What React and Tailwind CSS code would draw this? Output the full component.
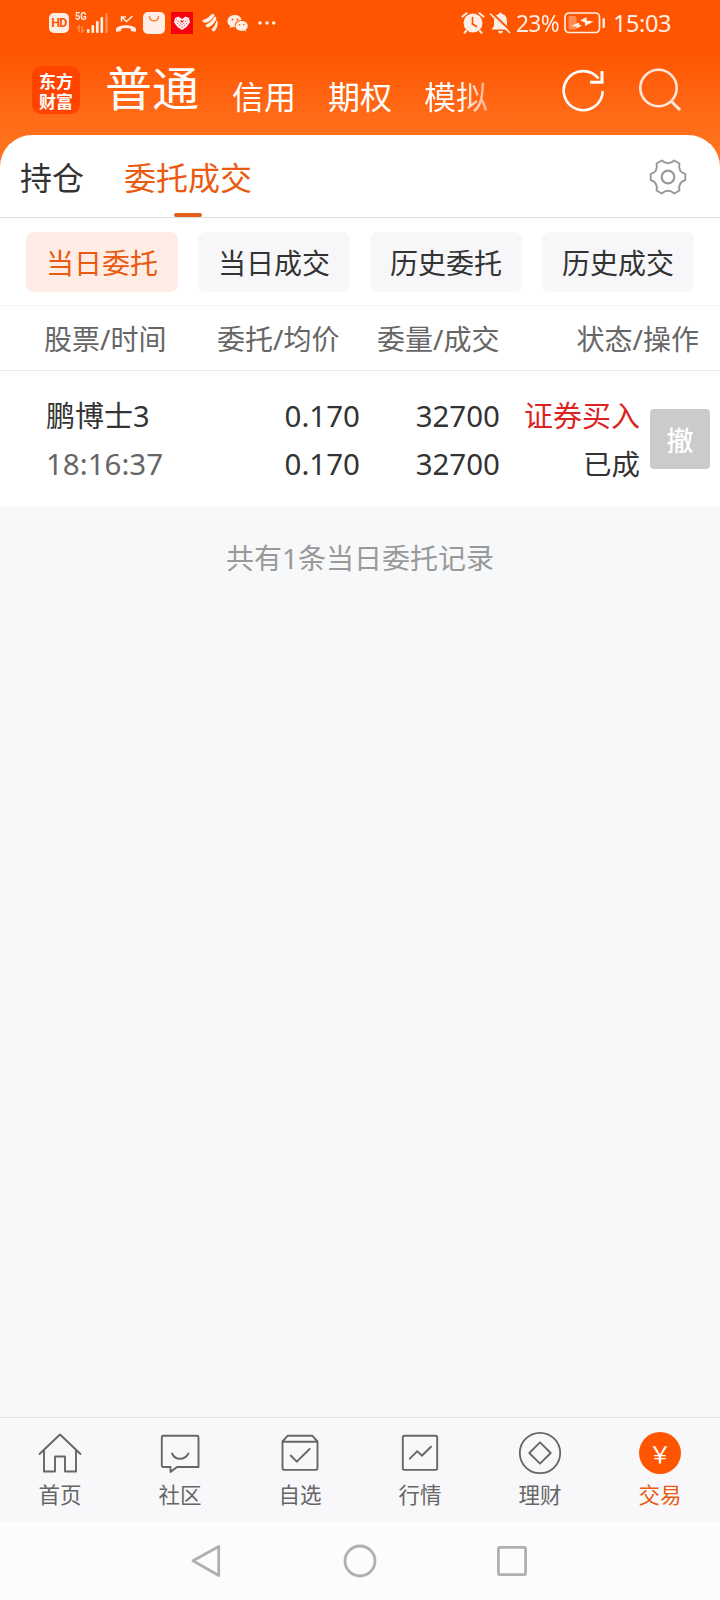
import React, { useState } from 'react';
import clsx from 'clsx';

const accountTabs = ['信用', '期权', '模拟'];
const filters = ['当日委托', '当日成交', '历史委托', '历史成交'];

const orders = [
  {
    name: '鹏博士3',
    time: '18:16:37',
    price: '0.170',
    avgPrice: '0.170',
    amount: '32700',
    filled: '32700',
    side: '证券买入',
    status: '已成',
  },
];

const HomeIcon = () => (
  <svg width="44" height="44" viewBox="0 0 44 44" fill="none" stroke="currentColor" strokeWidth="1.9" strokeLinejoin="round" strokeLinecap="round">
    <path d="M1.5 23 22 3.500 42.500 23M6 19.500V40.500H17V25.500H27V40.500H38V19.500" />
  </svg>
);

const CommunityIcon = () => (
  <svg width="44" height="44" viewBox="0 0 44 44" fill="none" stroke="currentColor" strokeWidth="1.9" strokeLinejoin="round" strokeLinecap="round">
    <path d="M5 4.700H39Q40.500 4.700 40.500 6.200V36H19L12.500 41V36H5Q3.800 36 3.800 34.500V6.200Q3.800 4.700 5 4.700Z" />
    <path d="M14 22.500Q16.500 27.800 22 27.800T30.500 22.500" />
  </svg>
);

const WatchlistIcon = () => (
  <svg width="44" height="44" viewBox="0 0 44 44" fill="none" stroke="currentColor" strokeWidth="1.9" strokeLinejoin="round" strokeLinecap="round">
    <path d="M4.500 10.500 9.800 4.700H34.200L39.500 10.500V36.700Q39.500 38.900 37.300 38.900H6.700Q4.500 38.900 4.500 36.700ZM4.500 10.700H39.500" />
    <path d="M12.700 24.500 18.800 30.700 31.600 18" />
  </svg>
);

const MarketIcon = () => (
  <svg width="44" height="44" viewBox="0 0 44 44" fill="none" stroke="currentColor" strokeWidth="1.9" strokeLinejoin="round" strokeLinecap="round">
    <rect x="4.800" y="4.700" width="34.400" height="34.200" rx="1.500" />
    <path d="M11.800 27.700 19.300 20.200 23.800 24.700 33 15.700" />
  </svg>
);

const FinanceIcon = () => (
  <svg width="44" height="44" viewBox="0 0 44 44" fill="none" stroke="currentColor" strokeWidth="1.8" strokeLinejoin="round">
    <circle cx="22" cy="22" r="20.200" />
    <path d="M22 11.300 32.700 22 22 32.700 11.300 22Z" />
  </svg>
);

const TradeIcon = () => (
  <span className="my-px flex h-[42px] w-[42px] items-center justify-center rounded-full bg-[#ff5500] font-['Noto_Sans_CJK_SC',sans-serif] text-[23px] leading-none text-white">
    {'\uffe5'}
  </span>
);

const navItems = [
  { label: '首页', icon: HomeIcon },
  { label: '社区', icon: CommunityIcon },
  { label: '自选', icon: WatchlistIcon },
  { label: '行情', icon: MarketIcon },
  { label: '理财', icon: FinanceIcon },
  { label: '交易', icon: TradeIcon },
];

const StatusBar = () => (
  <div className="flex h-[46px] items-center pl-[49px] text-[#ffeee5]">
    <span className="flex h-5 w-5 items-center justify-center rounded-[5px] bg-[#ffeee5] font-['Roboto',sans-serif] text-[12.500px] leading-none font-bold tracking-tighter text-[#ff5500]">
      HD
    </span>
    <div className="relative ml-[6px] h-[22px] w-[34px]">
      <span className="absolute -top-[2px] left-0 origin-left scale-x-[0.85] font-['Roboto',sans-serif] text-[11px] leading-[14px] font-bold">5G</span>
      <svg width="34" height="22" viewBox="0 0 34 22" fill="currentColor">
        <path d="M2 16 4 14V20M7 14V20L9 18" fill="none" stroke="currentColor" strokeWidth="1.300" opacity="0.4" />
        <rect x="12" y="17" width="2.600" height="4" rx="1" />
        <rect x="16.500" y="13" width="2.600" height="8" rx="1" />
        <rect x="21" y="9" width="2.600" height="12" rx="1" />
        <rect x="25.500" y="5" width="2.600" height="16" rx="1" />
        <rect x="30.200" y="1" width="2.600" height="20" rx="1" opacity="0.35" />
      </svg>
    </div>
    <svg className="ml-[6px]" width="22" height="22" viewBox="0 0 22 22" fill="currentColor">
      <path d="M1 19V17C3 12 19 12 21 17V19Q21 20 20 19.800L16 19 15.500 16.500Q11 15.300 6.500 16.500L6 19 2 19.800Q1 20 1 19Z" />
      <path d="M6.500 9.500V5H11M6.500 5 11.500 9.500 17.500 4" fill="none" stroke="currentColor" strokeWidth="1.500" />
    </svg>
    <svg className="ml-[6px]" width="22" height="22" viewBox="0 0 22 22">
      <rect width="22" height="22" rx="5" fill="currentColor" />
      <path d="M6.500 4.500C7 10.300 15 10.300 15.500 4.500" fill="none" stroke="#ff7a35" strokeWidth="1.500" strokeLinecap="round" />
    </svg>
    <svg className="ml-[6px]" width="22" height="22" viewBox="0 0 22 22">
      <rect width="22" height="22" fill="#f5000c" />
      <path d="M11 18 6.500 15 3 10.500 4 6 7.500 4.500 11 7 14.500 4.500 18 6 19 10.500 15.500 15Z" fill="#ffe9e9" />
      <path d="M5.500 7.500 11 13 16.500 7.500M6 11 11 15.500 16 11" fill="none" stroke="#e8303a" strokeWidth="0.900" strokeDasharray="1.200 1.200" />
      <path d="M9 8.500 11 11 13 8.500Z" fill="#e8101c" />
    </svg>
    <svg className="ml-[8px]" width="18" height="20" viewBox="0 0 18 20" fill="currentColor">
      <path d="M1 7.500Q8 5 10 1.500 14 0 13.500 2.500 10.500 8 5 9.800 2 10 1 7.500Z" />
      <path d="M4.500 12Q11 9 13.500 3.500 16 3.500 15 7 12 12.500 7 14.500 5 14.500 4.500 12Z" />
      <path d="M10.500 16.500Q15 12 15.500 7 17.500 9 16 14 14.500 18 13 18.500 11.500 18.500 10.500 16.500Z" />
    </svg>
    <svg className="ml-[8px]" width="22" height="20" viewBox="0 0 22 20" fill="currentColor">
      <path d="M8 2C3.500 2 .500 4.700 .500 8.200 .500 10.200 1.500 11.800 3.200 12.900L2.600 15.200 5.200 13.900Q6.500 14.300 7.800 14.300C6.800 10 10 7 14.700 7 14 4 11.300 2 8 2Z" />
      <path d="M14.700 8C11 8 8.500 10.200 8.500 13S11 17.900 14.700 17.900Q15.900 17.900 17 17.500L19.200 18.500 18.700 16.700Q20.800 15.200 20.800 13C20.800 10.200 18.300 8 14.700 8Z" />
      <g fill="#ff5500">
        <circle cx="5.500" cy="6.600" r="1" />
        <circle cx="10.300" cy="6.600" r="1" />
        <circle cx="12.600" cy="11.800" r="0.800" />
        <circle cx="16.800" cy="11.800" r="0.800" />
      </g>
    </svg>
    <svg className="ml-[9px]" width="18" height="4" viewBox="0 0 18 4" fill="currentColor">
      <circle cx="2" cy="2" r="1.800" />
      <circle cx="9" cy="2" r="1.800" />
      <circle cx="15.700" cy="2" r="1.800" />
    </svg>

    <div className="ml-auto flex items-center pr-[48px]">
      <svg width="24" height="22" viewBox="0 0 24 22">
        <circle cx="12" cy="11" r="9.500" fill="currentColor" />
        <path d="M1.500 4.500 5.500 1.200M22.500 4.500 18.500 1.200M5 19 3.500 20.800M19 19 20.500 20.800" stroke="currentColor" strokeWidth="2" strokeLinecap="round" />
        <path d="M11.500 5.500V12L15.500 14.500" fill="none" stroke="#ff5500" strokeWidth="1.700" strokeLinecap="round" />
      </svg>
      <svg className="ml-[4px]" width="23" height="22" viewBox="0 0 23 22">
        <path d="M11.500 .500Q13 .500 13 2C17 3 18 6 18 10V14L20.500 17.500H2.500L5 14V10C5 6 6 3 10 2Q10 .500 11.500 .500ZM9 19H14Q13.500 21.500 11.500 21.500T9 19Z" fill="currentColor" />
        <path d="M3 1 22 19" stroke="#ff5500" strokeWidth="2" />
        <path d="M1.500 2 20.500 20.500" stroke="currentColor" strokeWidth="1.600" strokeLinecap="round" />
      </svg>
      <span className="ml-[4px] w-[45px] pt-px text-[23.500px] leading-none tracking-[-0.700px]">
        <span className="inline-block origin-left scale-x-[0.97]">23%</span>
      </span>
      <svg className="ml-[3px]" width="42" height="22" viewBox="0 0 42 22">
        <rect x="1" y="1" width="34.500" height="19.500" rx="4" fill="none" stroke="currentColor" strokeWidth="1.700" />
        <rect x="4.500" y="4" width="8" height="13.500" rx="1.500" fill="currentColor" opacity="0.35" />
        <path d="M7 14 15 10.500V12.500L18 13.500 12.500 16.500V14.500ZM16 8.500 22.500 5V8.500L29.500 9.500 21 14V10.500Z" fill="currentColor" />
        <rect x="38.500" y="6" width="2.400" height="10" rx="1.200" fill="currentColor" />
      </svg>
      <span className="ml-[7px] w-[59px] pt-px text-[23.500px] leading-none tracking-[-0.400px]">15:03</span>
    </div>
  </div>
);

const Header = () => (
  <header className="h-[170px] bg-linear-to-b from-[#ff5500] from-30% to-[#ff751f] to-90%">
    <StatusBar />
    <div className="flex h-[89px] items-start pl-8 text-white">
      <div className="mt-5 flex h-12 w-12 flex-col items-center justify-center gap-[3px] rounded-[9px] bg-[#ff4400] font-['Noto_Sans_CJK_SC',sans-serif] text-[17px] leading-[17px] font-bold">
        <span>东方</span>
        <span>财富</span>
      </div>
      <h1 className="mt-[18px] ml-[25px] text-[47px] leading-[48px]">普通</h1>
      <div className="mt-[35px] ml-[33px] flex gap-8 text-[32px] leading-[32px]">
        {accountTabs.map((tab) => (
          <span
            key={tab}
            className={clsx(tab === '模拟' && 'bg-linear-to-r from-white from-55% to-white/50 bg-clip-text text-transparent')}
          >
            {tab}
          </span>
        ))}
      </div>
      <svg className="mt-[22px] ml-auto" width="44" height="44" viewBox="0 0 44 44" fill="none" stroke="currentColor" strokeWidth="2.600">
        <path d="M40.700 23A19.500 19.500 0 1 1 36.500 10.500" />
        <path d="M40 3V14.300H28" strokeWidth="3" />
      </svg>
      <svg className="mt-[22px] mr-[38px] ml-[32px] opacity-85" width="44" height="44" viewBox="0 0 44 44" fill="none" stroke="currentColor" strokeWidth="2.600">
        <circle cx="20.500" cy="20" r="18.200" />
        <path d="M33 33 42 42" strokeWidth="3" />
      </svg>
    </div>
  </header>
);

const GearIcon = () => (
  <svg width="38" height="38" viewBox="-19 -19 38 38" fill="none" stroke="#999" strokeWidth="1.900" strokeLinejoin="round">
    <path d="M6.250-16.500 11.450-13.500Q9.600-5.550 17.300-3V3Q9.600 5.550 11.450 13.500L6.250 16.500Q0 11.100-6.250 16.500L-11.450 13.500Q-9.600 5.550-17.300 3V-3Q-9.600-5.550-11.450-13.500L-6.250-16.500Q0-11.100 6.250-16.500Z" />
    <circle r="6.300" strokeWidth="2.200" />
  </svg>
);

const OrderRow = ({ order }) => (
  <div className="flex h-[136px] items-start bg-white pt-[21px] pr-[10px] pl-[46px] text-[29px] leading-[48px] text-[#333]">
    <div className="w-[163px]">
      <p>{order.name}</p>
      <p className="text-[29.500px] text-[#666]">{order.time}</p>
    </div>
    <div className="w-[151px] text-right text-[29.500px]">
      <p>{order.price}</p>
      <p>{order.avgPrice}</p>
    </div>
    <div className="w-[140px] text-right text-[29.500px]">
      <p>{order.amount}</p>
      <p>{order.filled}</p>
    </div>
    <div className="w-[140px] text-right">
      <p className="text-[#dd2222]">{order.side}</p>
      <p className="text-[28.500px]">{order.status}</p>
    </div>
    <button className="mt-[17px] ml-auto h-[60px] w-[60px] rounded-[4px] bg-[#cbcbcb] text-[27px] leading-[64px] font-medium text-white">
      撤
    </button>
  </div>
);

const App = () => {
  const [activeFilter, setActiveFilter] = useState(0);
  const [activeNav, setActiveNav] = useState(5);

  return (
    <div className="flex h-[1600px] w-[720px] flex-col overflow-hidden bg-[#f7f8fa] font-['Noto_Sans','Noto_Sans_CJK_SC',sans-serif]">
      <Header />

      <main className="-mt-[35px] flex-1">
        <div className="flex h-[83px] items-start rounded-t-[32px] border-b border-[#dedede] bg-white pl-5 text-[32px] leading-[85px] text-[#333]">
          <span>持仓</span>
          <div className="ml-10 flex h-[82px] flex-col items-center text-[#ea5a10]">
            <span className="h-[78px]">委托成交</span>
            <span className="h-1 w-7 rounded-full bg-[#e2601a]" />
          </div>
          <div className="mt-[23px] mr-[33px] ml-auto">
            <GearIcon />
          </div>
        </div>

        <div className="flex h-[88px] gap-5 border-b border-[#f5f5f5] bg-white px-[26px] pt-[14px]">
          {filters.map((label, idx) => (
            <button
              key={label}
              onClick={() => setActiveFilter(idx)}
              className={clsx(
                'h-[60px] w-[152px] rounded-lg text-[28px] leading-[63px]',
                activeFilter === idx ? 'bg-[#ffede5] text-[#ea5a10]' : 'bg-[#f7f7fa] text-[#333]'
              )}
            >
              {label}
            </button>
          ))}
        </div>

        <div className="flex h-[65px] border-b border-[#ececec] bg-white pr-[21px] pl-[44px] text-[28px] leading-[67px] text-[#666]">
          <span className="w-[173px]">股票/时间</span>
          <span className="w-[160px]">委托/均价</span>
          <span>委量/成交</span>
          <span className="ml-auto">状态/操作</span>
        </div>

        {orders.map((order) => (
          <OrderRow key={order.time} order={order} />
        ))}

        <p className="mt-[30px] text-center text-[28px] leading-[42px] text-[#999]">
          共有{orders.length}条当日委托记录
        </p>
      </main>

      <nav className="flex h-[105px] border-t border-[#e2e2e4] bg-[#f8f8fa]">
        {navItems.map(({ label, icon: Icon }, idx) => (
          <button
            key={label}
            onClick={() => setActiveNav(idx)}
            className={clsx('flex flex-1 flex-col items-center pt-[13px]', activeNav === idx ? 'text-[#ea5a10]' : 'text-[#666]')}
          >
            <Icon />
            <span className="mt-[4px] text-[21.500px] leading-[32px]">{label}</span>
          </button>
        ))}
      </nav>

      <div className="flex h-[78px] bg-[#fcfcfc] pt-[22px] pl-[190px] text-[#b0b0b0]">
        <svg width="32" height="34" viewBox="0 0 32 34" fill="none" stroke="currentColor" strokeWidth="2.800" strokeLinejoin="round">
          <path d="M28.700 2.500V31.500L3 16.800Z" />
        </svg>
        <svg className="ml-[121px]" width="34" height="34" viewBox="0 0 34 34" fill="none" stroke="currentColor" strokeWidth="2.800">
          <circle cx="17" cy="17" r="15" />
        </svg>
        <svg className="ml-[119px]" width="32" height="34" viewBox="0 0 32 34" fill="none" stroke="currentColor" strokeWidth="2.800">
          <rect x="2.400" y="3.400" width="27.200" height="27.200" rx="1.500" />
        </svg>
      </div>
    </div>
  );
};

export default App;
